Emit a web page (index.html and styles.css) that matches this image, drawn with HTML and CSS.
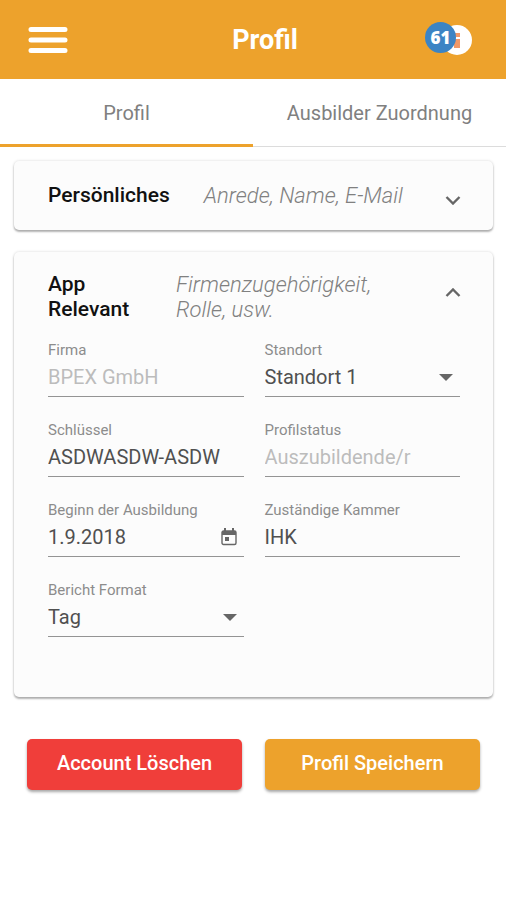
FILE: index.html
```html
<!DOCTYPE html>
<html lang="de">
<head>
<meta charset="utf-8">
<meta name="viewport" content="width=device-width, initial-scale=1">
<title>Profil</title>
<link rel="stylesheet" href="styles.css">
</head>
<body>
<header class="topbar">
  <button class="menu" type="button" aria-label="Menü">
    <svg width="40" height="28" viewBox="0 0 40 28"><path d="M3 3.500h34M3 14h34M3 24.500h34" stroke="#fff" stroke-width="5" stroke-linecap="round"/></svg>
  </button>
  <h1 class="title">Profil</h1>
  <button class="info" type="button" aria-label="Benachrichtigungen">
    <svg width="30" height="30" viewBox="0 0 30 30"><circle cx="15" cy="15" r="15" fill="#fff"/><path d="M13 8h5v4h-5zM12 14h6v9h-6z" fill="#f09868"/></svg>
    <span class="badge">61</span>
  </button>
</header>
<nav class="tabs">
  <a class="tab tab-active" href="#profil">Profil</a>
  <a class="tab" href="#ausbilder">Ausbilder Zuordnung</a>
</nav>
<main class="content">
  <section class="panel">
    <button class="summary" type="button" aria-expanded="false">
      <span class="name">Persönliches</span>
      <span class="hint">Anrede, Name, E-Mail</span>
      <svg class="chevron" width="16" height="18" viewBox="0 0 16 18"><path d="M1.500 10L8 16.500l6.500-6.500" fill="none" stroke="#666" stroke-width="2.400"/></svg>
    </button>
  </section>
  <section class="panel">
    <button class="summary summary-open" type="button" aria-expanded="true">
      <span class="name">App Relevant</span>
      <span class="hint">Firmenzugehörigkeit, Rolle, usw.</span>
      <svg class="chevron" width="16" height="18" viewBox="0 0 16 18"><path d="M1.500 8L8 1.500l6.500 6.500" fill="none" stroke="#666" stroke-width="2.400"/></svg>
    </button>
    <form class="fields" id="profil-form">
      <div class="field">
        <label for="firma">Firma</label>
        <div class="control"><input id="firma" type="text" value="BPEX GmbH" disabled></div>
      </div>
      <div class="field">
        <label for="standort">Standort</label>
        <div class="control">
          <select id="standort"><option>Standort 1</option></select>
          <svg class="arrow" width="14" height="7" viewBox="0 0 14 7"><path d="M0 0h14L7 7z" fill="#666"/></svg>
        </div>
      </div>
      <div class="field">
        <label for="schluessel">Schlüssel</label>
        <div class="control"><input id="schluessel" type="text" value="ASDWASDW-ASDW"></div>
      </div>
      <div class="field">
        <label for="status">Profilstatus</label>
        <div class="control"><input id="status" type="text" value="Auszubildende/r" disabled></div>
      </div>
      <div class="field">
        <label for="beginn">Beginn der Ausbildung</label>
        <div class="control">
          <input id="beginn" type="text" value="1.9.2018">
          <button class="calendar" type="button" aria-label="Kalender öffnen">
            <svg width="16" height="18" viewBox="0 0 16 18"><path d="M2.500 3h11a1.500 1.500 0 0 1 1.500 1.500v10.500a1.500 1.500 0 0 1-1.500 1.500h-11a1.500 1.500 0 0 1-1.500-1.500v-10.500a1.500 1.500 0 0 1 1.500-1.500z" fill="none" stroke="#666" stroke-width="1.400"/><path d="M1 3h14v4h-14zM3 0h2v3h-2zM11 0h2v3h-2zM4 9h4v4h-4z" fill="#666"/></svg>
          </button>
        </div>
      </div>
      <div class="field">
        <label for="kammer">Zuständige Kammer</label>
        <div class="control"><input id="kammer" type="text" value="IHK"></div>
      </div>
      <div class="field">
        <label for="format">Bericht Format</label>
        <div class="control">
          <select id="format"><option>Tag</option></select>
          <svg class="arrow" width="14" height="7" viewBox="0 0 14 7"><path d="M0 0h14L7 7z" fill="#666"/></svg>
        </div>
      </div>
    </form>
  </section>
  <div class="actions">
    <button class="action action-delete" type="button">Account Löschen</button>
    <button class="action action-save" type="submit" form="profil-form">Profil Speichern</button>
  </div>
</main>
</body>
</html>
```
FILE: styles.css
```css
* {
  box-sizing: border-box;
}

body {
  margin: 0;
  background: #fff;
  color: #505050;
  font-family: Roboto, "Liberation Sans", sans-serif;
  font-size: 20px;
}

button,
input,
select {
  margin: 0;
  padding: 0;
  border: 0;
  background: none;
  color: inherit;
  font: inherit;
}

svg {
  display: block;
}

.topbar {
  display: grid;
  grid-template-columns: 1fr auto 1fr;
  align-items: center;
  height: 79px;
  padding: 0 34px 0 28px;
  background: #eda22c;
  color: #fff;
}

.menu {
  justify-self: start;
}

.title {
  margin: 0;
  padding-left: 30px;
  font-size: 27px;
  font-weight: 700;
}

.info {
  position: relative;
  justify-self: end;
}

.badge {
  position: absolute;
  top: -3px;
  right: 16px;
  width: 31px;
  height: 31px;
  border-radius: 50%;
  background: #3c84c4;
  font-family: "Open Sans", sans-serif;
  font-size: 17px;
  font-weight: 800;
  line-height: 31px;
  text-align: center;
}

.tabs {
  display: grid;
  grid-template-columns: 1fr 1fr;
  border-bottom: 1px solid #dcdcdc;
}

.tab {
  height: 68px;
  margin-bottom: -1px;
  border-bottom: 3px solid transparent;
  color: #808080;
  line-height: 68px;
  text-align: center;
  text-decoration: none;
  white-space: nowrap;
}

.tab-active {
  border-bottom-color: #eda22c;
}

.content {
  padding: 14px 13px 0 14px;
}

.panel {
  margin-bottom: 22px;
  border-radius: 5px;
  background: #fcfcfc;
  box-shadow: 0 2px 2px rgba(0, 0, 0, 0.28), 0 0 3px rgba(0, 0, 0, 0.16);
}

.summary {
  display: flex;
  align-items: center;
  gap: 34px;
  width: 100%;
  min-height: 69px;
  padding: 0 32px 0 34px;
  line-height: 25px;
  text-align: left;
}

.summary-open {
  gap: 44px;
  padding-top: 20px;
}

.name {
  color: #111;
  font-size: 21px;
  font-weight: 500;
}

.summary-open .name {
  flex: 0 0 84px;
}

.hint {
  flex: 1;
  color: #808080;
  font-size: 22px;
  font-style: italic;
  font-weight: 300;
}

.chevron {
  flex: none;
}

.fields {
  display: grid;
  grid-template-columns: repeat(2, minmax(0, 1fr));
  gap: 25px 21px;
  padding: 20px 33px 60px 34px;
}

.field label {
  display: block;
  color: #8c8c8c;
  font-size: 15px;
  line-height: 16px;
}

.control {
  position: relative;
  display: flex;
  align-items: center;
  height: 39px;
  border-bottom: 1px solid #949494;
}

.control input,
.control select {
  flex: 1;
  min-width: 0;
  height: 24px;
  appearance: none;
  outline: 0;
}

.control input:disabled {
  color: #bcbcbc;
}

.arrow {
  position: absolute;
  right: 7px;
  pointer-events: none;
}

.calendar {
  padding-right: 7px;
}

.actions {
  display: grid;
  grid-template-columns: 1fr 1fr;
  gap: 23px;
  padding: 20px 13px;
}

.action {
  height: 51px;
  padding-bottom: 4px;
  border-radius: 5px;
  box-shadow: 0 2px 3px rgba(0, 0, 0, 0.35);
  color: #fff;
  font-weight: 500;
}

.action-delete {
  background: #f03e3a;
}

.action-save {
  background: #eda22c;
}
```
